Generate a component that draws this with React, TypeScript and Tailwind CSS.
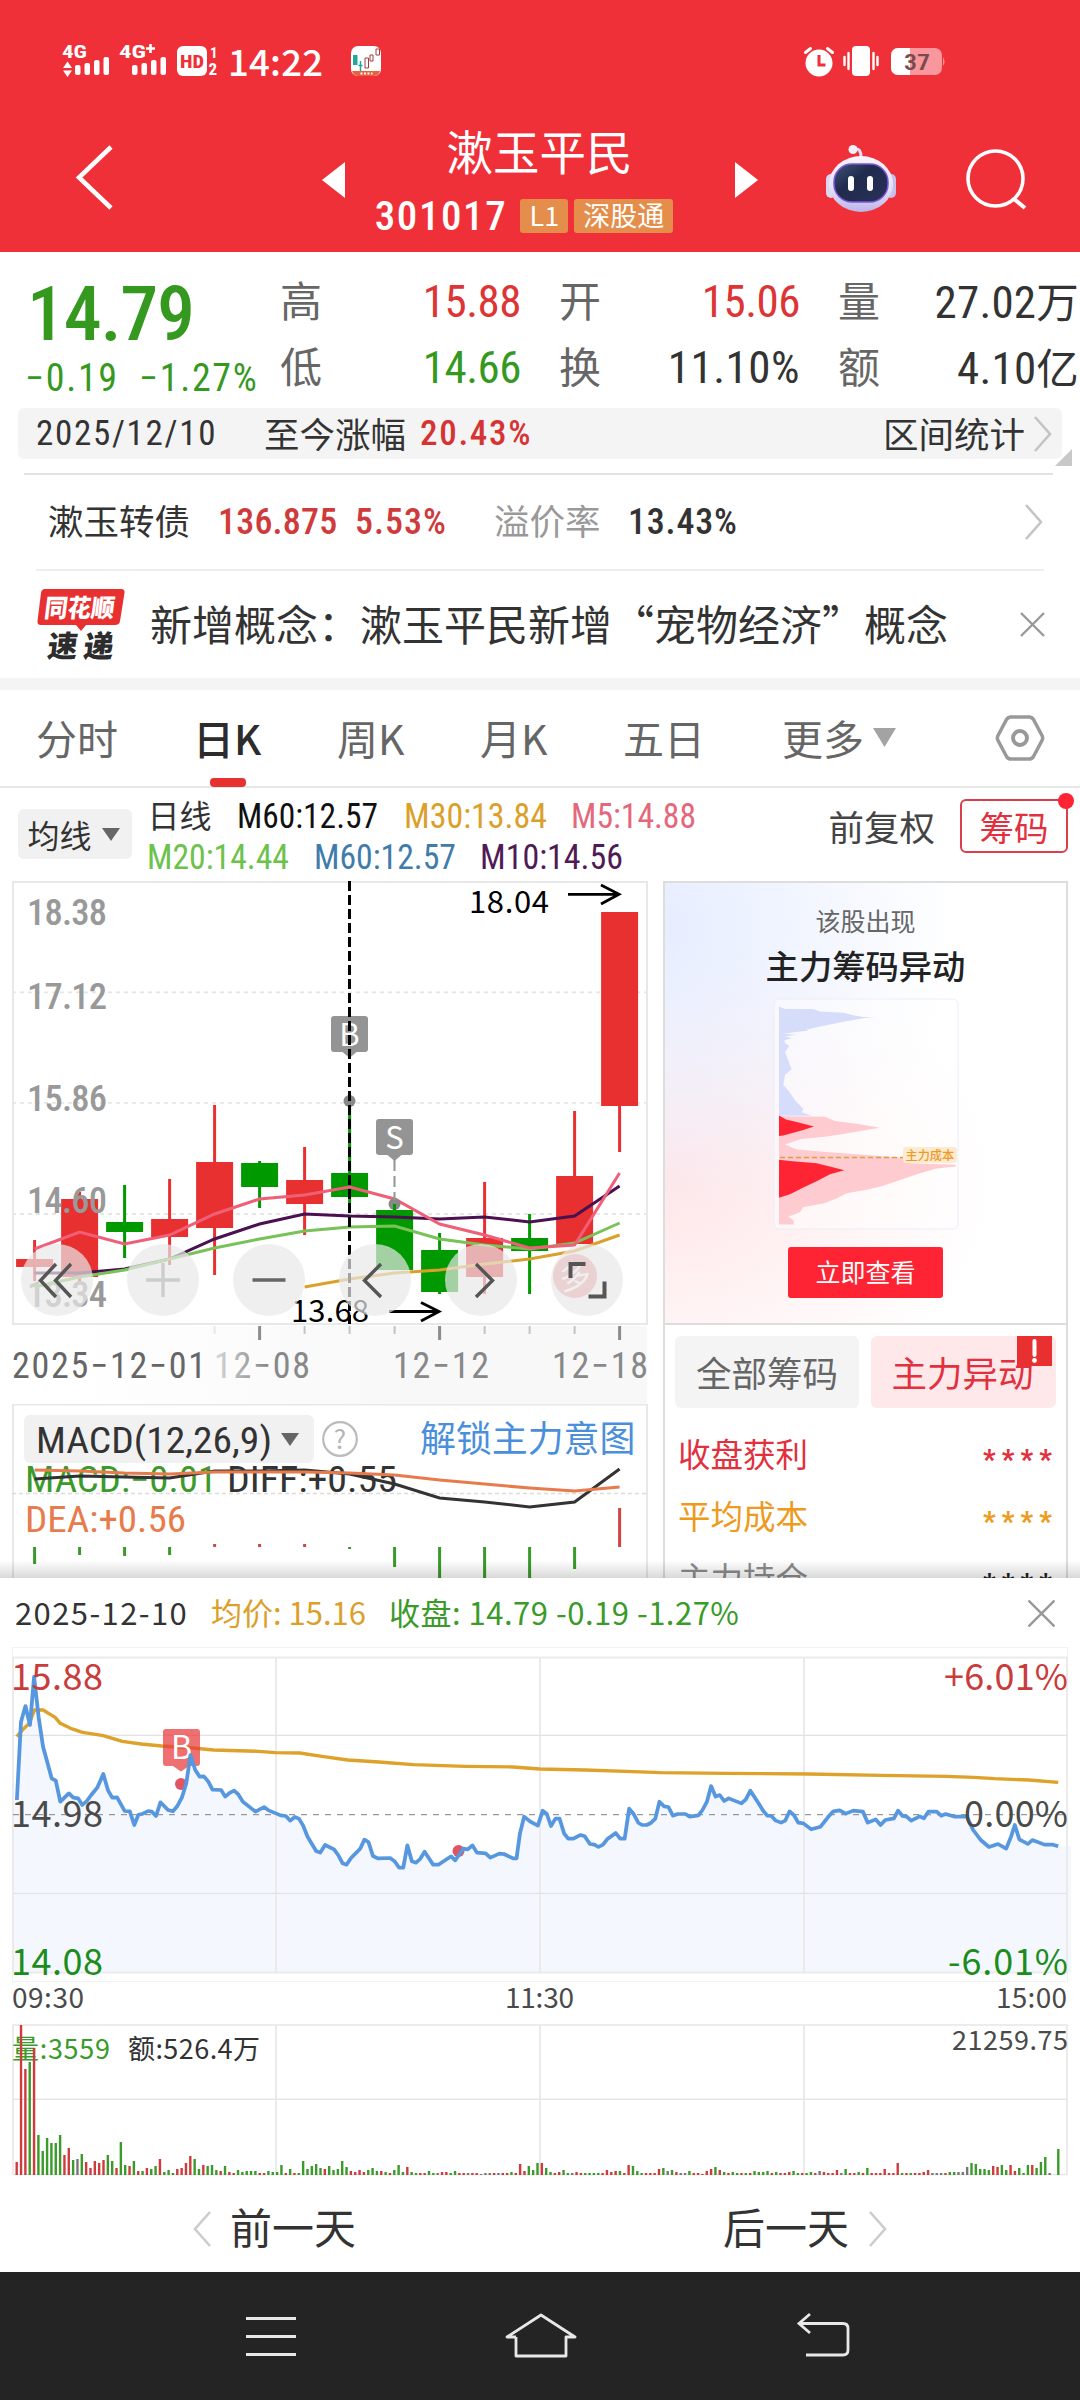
import React from "react";
import clsx from "clsx";

const CJK = "font-['Noto_Sans_CJK_SC',sans-serif]";
const DIN = "font-['Roboto_Condensed','Noto_Sans_CJK_SC',sans-serif]";

const RED = "#e83030";
const GREEN = "#009900";

/* ---------- data ---------- */

// [high, low, body top, body bottom, rising]
const candles: [number, number, number, number, boolean][] = [
  [1240, 1281, 1259, 1267, true],
  [1192, 1282, 1199, 1277, true],
  [1185, 1258, 1222, 1232, false],
  [1179, 1265, 1219, 1237, true],
  [1105, 1275, 1162, 1228, true],
  [1161, 1208, 1163, 1187, false],
  [1147, 1235, 1180, 1204, true],
  [1100, 1203, 1173, 1197, false],
  [1204, 1270, 1210, 1270, false],
  [1233, 1294, 1250, 1292, false],
  [1182, 1294, 1238, 1277, true],
  [1214, 1294, 1238, 1251, false],
  [1111, 1244, 1176, 1244, true],
  [912, 1152, 912, 1106, true],
];

const maLines = [
  { color: "#4a1050", from: 0, ys: [1273, 1273, 1269, 1259, 1239, 1224, 1214, 1216, 1217, 1219, 1217, 1222, 1216, 1186] },
  { color: "#78c257", from: 0, ys: [1287, 1277, 1270, 1259, 1248, 1239, 1231, 1227, 1226, 1239, 1245, 1249, 1243, 1223] },
  { color: "#f05f78", from: 0, ys: [1249, 1232, 1244, 1235, 1214, 1199, 1195, 1187, 1199, 1224, 1235, 1248, 1245, 1173] },
  { color: "#dba02a", from: 6, ys: [1287, 1279, 1273, 1270, 1264, 1259, 1251, 1235] },
];

const diffLine = [1479, 1476, 1477, 1478, 1471, 1471, 1470, 1474, 1484, 1498, 1502, 1507, 1502, 1469];
const deaLine = [1470, 1471, 1473, 1474, 1472, 1472, 1472, 1473, 1475, 1480, 1484, 1488, 1491, 1487];
const macdBars = [17, 8, 9, 8, -3, -3, -3, 2, 20, 40, 40, 40, 22, -39];

const dayX = (i: number) => 34.6 + i * 45;
const toPoints = (ys: number[], from = 0) =>
  ys.map((y, i) => `${dayX(i + from)},${y}`).join(" ");

// minute series, stored at three device units per pixel
const priceLine =
  "49,690 61,455 74,408 87,465 99,320 112,440 125,530 137,575 150,625 162,632 175,695 200,670 213,683 227,685 239,705 252,693 265,675 283,652 300,612 314,662 326,683 340,682 362,723 377,724 390,765 402,734 415,731 430,723 441,725 453,738 466,697 488,720 502,724 515,708 528,683 541,640 553,555 567,600 580,620 592,619 605,635 617,659 642,660 654,680 668,668 680,662 692,673 705,695 742,725 767,711 780,721 815,736 830,738 843,752 856,741 868,746 880,766 893,800 918,843 930,848 944,825 970,838 982,855 995,880 1006,884 1020,863 1046,836 1058,809 1070,816 1083,858 1097,865 1133,864 1146,874 1159,893 1171,893 1183,826 1196,874 1208,878 1220,867 1233,845 1258,884 1273,884 1310,859 1322,871 1345,836 1358,838 1372,826 1385,848 1410,850 1424,863 1450,851 1463,852 1490,865 1500,865 1510,790 1522,740 1540,755 1562,767 1576,722 1588,732 1600,768 1613,746 1625,746 1638,790 1650,806 1665,806 1686,795 1698,799 1713,822 1726,824 1738,831 1751,824 1763,808 1788,789 1801,806 1814,806 1827,716 1840,732 1854,759 1865,765 1878,765 1890,759 1903,746 1915,695 1928,709 1941,711 1954,737 1968,732 1990,732 2003,740 2028,736 2040,720 2053,695 2065,648 2078,680 2090,675 2103,693 2116,685 2153,700 2166,688 2179,662 2198,692 2216,722 2228,737 2240,738 2253,752 2268,758 2280,752 2293,724 2306,736 2318,758 2333,760 2356,778 2383,770 2408,737 2420,724 2438,721 2456,731 2478,722 2506,725 2520,758 2543,748 2557,765 2571,750 2596,745 2608,722 2621,738 2633,740 2646,752 2671,739 2683,745 2696,725 2720,725 2733,737 2746,732 2773,740 2808,740 2826,780 2848,810 2872,831 2898,822 2922,836 2936,800 2947,765 2960,808 2985,822 2998,810 3033,824 3058,824 3073,829";
const avgLine =
  "49,500 65,480 85,460 100,420 125,420 160,442 175,460 205,475 240,487 300,497 355,514 410,522 470,528 560,534 620,540 750,544 800,548 870,549 940,560 1010,570 1100,576 1200,584 1350,589 1490,591 1568,597 1698,600 1818,604 1918,608 2108,610 2348,612 2558,616 2748,619 2828,622 2888,626 2988,630 3073,637";

// colour + height per minute: r up, g down, k flat
const volumes =
  "r13 r150 r106 g113 r127 g40 g24 g37 g32 g32 g40 r20 r27 g15 k16 g21 r13 r7 r14 r12 r15 g20 g14 r7 g33 g10 r9 g14 r4 g4 r7 g6 g9 r16 g3 g5 g2 r6 r7 r12 r19 g16 g6 r10 g9 g10 g5 r4 g9 r3 r2 g5 g3 g4 g4 g4 r2 r2 g4 g3 g3 g10 r2 g6 r2 g2 g14 g6 g9 g11 g7 r6 g9 g5 g6 g14 g8 r4 r3 r5 r3 g5 g7 g4 r4 g3 r2 g5 g10 g3 r8 g3 g2 r2 r2 g4 g2 k2 r3 r3 g2 g4 r2 r2 k2 r2 r2 k1 k2 k2 r2 k2 r2 r2 g3 r2 r11 r4 g9 g5 g12 r12 g7 g3 r2 r3 g5 g2 k2 r3 r2 g2 g2 g2 g2 r2 r5 r3 r4 g4 r2 r10 g9 g4 g2 r2 r2 r2 r6 g7 k4 g5 r3 k2 k2 g4 r2 r2 r1 r4 r6 g8 r5 g3 r2 g3 g2 r2 g2 r2 g4 g3 g3 g4 r2 g3 r2 r2 r3 g4 g2 r2 g2 g3 r2 k4 r3 r2 r2 r5 k2 g6 r2 r2 g3 r2 g7 r2 r2 r2 r6 r2 r2 r12 g2 r2 g2 r2 r2 r3 r5 k2 k2 k2 r2 g3 g3 k3 k3 k8 g12 g11 g6 g6 g5 r9 r8 g10 g5 r10 r4 g7 g2 g10 r10 g7 g13 g18 k2 k0 g26".split(" ");
const volColor: Record<string, string> = { r: "#cf3b3b", g: "#3a9a2a", k: "#777777" };

const quotes = [
  [
    { label: "高", value: "15.88", unit: "", className: "text-[#dd3535] tracking-[-0.5px]" },
    { label: "低", value: "14.66", unit: "", className: "text-[#35991f] tracking-[-0.5px]" },
  ],
  [
    { label: "开", value: "15.06", unit: "", className: "text-[#dd3535] tracking-[-0.5px]" },
    { label: "换", value: "11.10%", unit: "", className: "text-[#333] tracking-[0.5px]" },
  ],
  [
    { label: "量", value: "27.02", unit: "万", className: "text-[#333] tracking-[0.2px]" },
    { label: "额", value: "4.10", unit: "亿", className: "text-[#333] tracking-[0.2px]" },
  ],
];

/* ---------- small pieces ---------- */

function Chevron({ dir = "right", className }: { dir?: "left" | "right"; className?: string }) {
  return (
    <svg width="20" height="36" viewBox="0 0 20 36" fill="none" className={clsx("shrink-0", className)}>
      <path d={dir === "right" ? "M2 1 17 18 2 35" : "M18 1 3 18 18 35"} stroke="currentColor" strokeWidth="2.6" />
    </svg>
  );
}

function SignalBars({ x }: { x: number }) {
  return (
    <g fill="#fff">
      <rect x={x} y="35" width="5.5" height="10" rx="2" />
      <rect x={x + 9.5} y="33" width="5.5" height="12" rx="2" />
      <rect x={x + 19} y="30" width="5.5" height="15" rx="2" />
      <rect x={x + 28.5} y="27" width="5.5" height="18" rx="2" />
    </g>
  );
}

function StatusBar() {
  return (
    <div className="flex h-[60px] items-start pl-[50px]">
      <svg width="350" height="60" viewBox="50 0 350 60" className="shrink-0">
        <text x="62" y="27.5" fontSize="18" fontWeight="700" fill="#fff" textLength="25" lengthAdjust="spacingAndGlyphs" className={DIN}>4G</text>
        <text x="119" y="27.5" fontSize="18" fontWeight="700" fill="#fff" textLength="27" lengthAdjust="spacingAndGlyphs" className={DIN}>4G</text>
        <path d="M150.500 14v9M146 18.500h9" stroke="#fff" strokeWidth="2.600" />
        <path d="M67.500 31.500 72 38H63zM67.500 47 72 40.500H63z" fill="#fff" />
        <SignalBars x={75} />
        <SignalBars x={132} />
        <rect x="177" y="16" width="30" height="30" rx="6" fill="#fff" />
        <text x="180" y="37.500" fontSize="19" fontWeight="800" fill="#f03038" textLength="24" lengthAdjust="spacingAndGlyphs" className={DIN}>HD</text>
        <text x="210" y="27.500" fontSize="15" fontWeight="700" fill="#fff" className={DIN}>1</text>
        <text x="208.500" y="45" fontSize="17" fontWeight="700" fill="#fff" className={DIN}>2</text>
        <text x="228" y="46" fontSize="36.500" fontWeight="500" fill="#fff" textLength="95" className={CJK}>14:22</text>
        <rect x="351" y="16" width="30" height="30" rx="7" fill="#fff" />
        <path d="M352 41h28a7 7 0 0 1-6 5h-16a7 7 0 0 1-6-5z" fill="#e8603c" />
        <path d="M360.500 43.500h12" stroke="#fff" strokeWidth="2" strokeDasharray="2 1.500" />
        <rect x="353" y="25" width="4.500" height="10" fill="#20a89c" />
        <path d="M360.500 31v10M358.500 35.500h4" stroke="#20a89c" strokeWidth="1.500" />
        <path d="M365 28h3.500v10H365zM370 25h3v6h-3zM376 19h3.500v6H376z" fill="#fff" stroke="#a33f3f" strokeWidth="1" />
      </svg>
      <svg width="150" height="60" viewBox="800 30 150 60" className="ml-auto mr-[130px] shrink-0">
        <circle cx="819" cy="63" r="13.500" fill="#fff" />
        <path d="M805.500 52.500 810.500 48.500M832.500 52.500 827.500 48.500" stroke="#fff" strokeWidth="3" strokeLinecap="round" />
        <path d="M819 55v10h6.500" stroke="#f03038" strokeWidth="3" fill="none" />
        <rect x="852" y="46" width="18" height="30" rx="4" fill="#fff" />
        <path d="M848.500 53v16M873.500 53v16M844.500 57v8M877.500 57v8" stroke="#fff" strokeWidth="2.400" strokeLinecap="round" />
        <rect x="891" y="48" width="51" height="27" rx="7" fill="#f9979c" />
        <path d="M898 48h12v27h-12a7 7 0 0 1-7-7V55a7 7 0 0 1 7-7z" fill="#fff" />
        <path d="M943 57q3 4.500 0 9z" fill="#f9979c" />
        <text x="904" y="69.500" fontSize="22" fontWeight="600" fill="#7a4a4c" textLength="26" lengthAdjust="spacingAndGlyphs" className={DIN}>37</text>
      </svg>
    </div>
  );
}

function Robot() {
  return (
    <svg width="76" height="70" viewBox="0 0 76 70">
      <defs>
        <linearGradient id="helmet" x1="0" y1="0" x2="0" y2="1">
          <stop offset="0" stopColor="#f8f5fc" />
          <stop offset=".6" stopColor="#e4dff5" />
          <stop offset="1" stopColor="#bdb4ea" />
        </linearGradient>
        <linearGradient id="visor" x1="0" y1="0" x2="1" y2="1">
          <stop offset="0" stopColor="#40527a" />
          <stop offset=".4" stopColor="#1f2b4d" />
          <stop offset="1" stopColor="#2a3158" />
        </linearGradient>
      </defs>
      <path d="M38 14Q38 5 32 6" stroke="#e4dcf4" strokeWidth="3" fill="none" />
      <circle cx="30" cy="6.500" r="4.500" fill="#f3eefb" />
      <rect x="3" y="31" width="10" height="24" rx="5" fill="#dcd6f3" />
      <rect x="63" y="31" width="10" height="24" rx="5" fill="#c6c0ec" />
      <ellipse cx="38" cy="41" rx="32" ry="28" fill="url(#helmet)" />
      <rect x="11" y="21" width="54" height="38" rx="18" fill="url(#visor)" stroke="#7a56d8" strokeWidth="1.500" />
      <rect x="25" y="33" width="6" height="15" rx="3" fill="#fff" />
      <rect x="44" y="33" width="6" height="15" rx="3" fill="#fff" />
    </svg>
  );
}

function Header() {
  return (
    <header className="h-[252px] bg-[#f03038] pt-[30px] text-white">
      <StatusBar />
      <div className="flex h-[162px] items-start">
        <svg width="120" height="162" viewBox="0 90 120 162" fill="none">
          <path d="M111 147 79 177.500 111 208" stroke="#fff" strokeWidth="4.500" />
        </svg>
        <svg width="226" height="162" viewBox="120 90 226 162">
          <path d="M345 162v36l-23-18z" fill="#fff" />
        </svg>
        <div className="flex w-[389px] flex-col items-center">
          <h1 className={clsx(CJK, "mr-[2px] mt-[32px] text-[46.500px] leading-[56px]")}>漱玉平民</h1>
          <div className="mr-[33px] mt-[20px] flex h-[36px] items-center">
            <span className={clsx(DIN, "mr-[13px] text-[41px] font-medium leading-none tracking-[1.6px]")}>301017</span>
            <span className={clsx(CJK, "mr-1.5 flex h-[34px] w-[48px] items-center justify-center rounded-[3px] bg-[#e58e4b] pb-[3px] text-[27px] leading-none")}>L1</span>
            <span className={clsx(CJK, "flex h-[34px] w-[99px] items-center justify-center rounded-[3px] bg-[#e58e4b] pb-[3px] text-[27px] leading-none")}>深股通</span>
          </div>
        </div>
        <svg width="88" height="162" viewBox="735 90 88 162">
          <path d="M735 162v36l23-18z" fill="#fff" />
        </svg>
        <div className="mt-[53px] w-[76px]">
          <Robot />
        </div>
        <svg width="130" height="162" viewBox="898 90 130 162" fill="none">
          <circle cx="994.500" cy="178.500" r="27.500" stroke="#fff" strokeWidth="3.600" />
          <path d="M1013 199 1024 208" stroke="#fff" strokeWidth="4" />
        </svg>
      </div>
    </header>
  );
}

function QuotePanel() {
  return (
    <section className="flex h-[156px] pt-[22px]">
      <div className="w-[280px] text-[#35991f]">
        <div className={clsx(DIN, "ml-[27px] mt-[2px] text-[76px] font-medium leading-[76px] tracking-[-1.3px]")}>14.79</div>
        <div className={clsx(DIN, "ml-[25px] mt-[7px] flex text-[38px] font-[450] leading-[38px] tracking-[1.7px]")}>
          <span className="w-[114px]">−0.19</span>
          <span>−1.27%</span>
        </div>
      </div>
      {quotes.map((col, i) => (
        <div key={i} className={clsx("w-[241px]", i > 0 && "ml-[38px]")}>
          {col.map((q) => (
            <div key={q.label} className="flex h-[66px] items-start justify-between whitespace-nowrap pt-[5px]">
              <span className={clsx(CJK, "-mt-px text-[42px] leading-none text-[#666]")}>{q.label}</span>
              <span className={clsx(DIN, "text-[45px] font-[450] leading-none", q.className)}>
                {q.value}
                {q.unit && <span className={clsx(CJK, "text-[42.500px] font-normal")}>{q.unit}</span>}
              </span>
            </div>
          ))}
        </div>
      ))}
    </section>
  );
}

function RangeBar() {
  return (
    <div className={clsx(CJK, "relative mx-[18px] flex h-[51px] items-center rounded-[6px] bg-[#f4f4f4] pl-[18px] text-[35.500px] leading-[45px] text-[#333]")}>
      <span className={clsx(DIN, "w-[228px] text-[35px] tracking-[1.7px]")}>2025/12/10</span>
      <span className="pb-[3px]">至今涨幅</span>
      <span className={clsx(DIN, "ml-[14px] text-[35px] font-medium tracking-[1.700px] text-[#d63434]")}>20.43%</span>
      <span className="ml-auto pb-[3px]">区间统计</span>
      <Chevron className="ml-[8px] mr-[9px] text-[#c4c4c4]" />
      <svg width="17" height="17" className="absolute -right-[10px] top-[41px]">
        <path d="M17 0v17H0z" fill="#c8c8c8" />
      </svg>
    </div>
  );
}

function BondRow() {
  return (
    <div className={clsx(CJK, "mx-[36px] flex h-[96px] items-center border-b-2 border-[#eee] pl-[12px] text-[35.500px] leading-[45px] text-[#333]")}>
      <span className="w-[170px] pb-[5px]">漱玉转债</span>
      <span className={clsx(DIN, "w-[137px] text-[36px] font-[470] tracking-[0.2px] text-[#cf3a3a]")}>136.875</span>
      <span className={clsx(DIN, "w-[139px] text-[36px] font-[470] tracking-[1px] text-[#cf3a3a]")}>5.53%</span>
      <span className="w-[134px] pb-[5px] text-[#999]">溢价率</span>
      <span className={clsx(DIN, "text-[36px] font-[470] tracking-[0.8px]")}>13.43%</span>
      <Chevron className="ml-auto text-[#c4c4c4]" />
    </div>
  );
}

function NewsRow() {
  return (
    <div className="flex h-[107px] items-center pl-[37px] pr-[35px]">
      <svg width="90" height="74" viewBox="0 0 90 74" className="shrink-0">
        <path d="M8 1h76q4 0 3.500 4L83 33q-.5 4-5 4H49l-5 6-5-6H4q-4 0-3.500-4L4 5q.5-4 4-4z" fill={RED} />
        <text x="7" y="28.500" fontSize="25" fontWeight="900" fill="#fff" textLength="70" lengthAdjust="spacingAndGlyphs" transform="skewX(-7) translate(3 0)" className={CJK}>同花顺</text>
        <text x="12" y="69" fontSize="30" fontWeight="900" fill="#2c2c2c" textLength="66" transform="skewX(-7) translate(6 0)" className={CJK}>速递</text>
      </svg>
      <span className={clsx(CJK, "ml-[23px] whitespace-nowrap pb-[4px] text-[42px] leading-[56px] text-[#333]")}>新增概念：漱玉平民新增“宠物经济”概念</span>
      <svg width="25" height="25" viewBox="0 0 25 25" className="ml-auto shrink-0">
        <path d="M1 1 24 24M24 1 1 24" stroke="#999" strokeWidth="2.400" />
      </svg>
    </div>
  );
}

function PeriodTabs() {
  const tabs = [
    { label: "分时", w: "w-[157px]" },
    { label: "日K", w: "w-[144px]", active: true },
    { label: "周K", w: "w-[143px]" },
    { label: "月K", w: "w-[143px]" },
    { label: "五日", w: "w-[159px]" },
  ];
  return (
    <nav className={clsx(CJK, "flex h-[98px] items-start border-b-2 border-[#e8e8e8] pl-[36px] text-[41px] leading-none text-[#666]")}>
      {tabs.map((t) => (
        <div key={t.label} className={clsx(t.w, "pt-[27px]", t.active && "font-medium text-[#2c2c2c]")}>
          {t.label}
          {t.active && <div className="ml-[17px] mt-[20px] h-[9px] w-[36px] rounded-[4px] bg-[#e83030]" />}
        </div>
      ))}
      <div className="flex pt-[27px]">
        更多
        <svg width="23" height="19" className="ml-[9px] mt-[11px]">
          <path d="M0 0h23L11.500 19z" fill="#a3a3a3" />
        </svg>
      </div>
      <svg width="50" height="46" viewBox="0 0 50 46" fill="none" stroke="#999" className="ml-auto mr-[35px] mt-[25px]">
        <path d="M16 2h18q3 0 4.500 2.500L47 20.500q1.300 2.500 0 5L38.500 41.500Q37 44 34 44H16q-3 0-4.500-2.500L3 25.500q-1.300-2.500 0-5L11.500 4.500Q13 2 16 2z" strokeWidth="3.500" />
        <circle cx="25" cy="23" r="7" strokeWidth="4" />
      </svg>
    </nav>
  );
}

/* ---------- daily chart column ---------- */

function Legend() {
  return (
    <div className="flex h-[93px]">
      <div className={clsx(CJK, "ml-[18px] mt-[21px] flex h-[50px] w-[114px] items-center justify-center gap-[10px] rounded-[6px] bg-[#f1f1f1] pr-[3px] text-[32px] leading-none text-[#333]")}>
        均线
        <svg width="18" height="13">
          <path d="M0 0h18L9 13z" fill="#666" />
        </svg>
      </div>
      <svg width="600" height="83" viewBox="148 798 600 83" className={clsx(DIN, "ml-[16px] mt-[10px] text-[35px] font-[450]")}>
        <text x="147.500" y="828" fontSize="32" fontWeight="400" fill="#333" className={CJK}>日线</text>
        <text x="237" y="828" fill="#111" textLength="141" lengthAdjust="spacingAndGlyphs">M60:12.57</text>
        <text x="404" y="828" fill="#dba02a" textLength="143" lengthAdjust="spacingAndGlyphs">M30:13.84</text>
        <text x="571" y="828" fill="#e4687c" textLength="125" lengthAdjust="spacingAndGlyphs">M5:14.88</text>
        <text x="147" y="869" fill="#6cc24a" textLength="142" lengthAdjust="spacingAndGlyphs">M20:14.44</text>
        <text x="314" y="869" fill="#3f7cab" textLength="142" lengthAdjust="spacingAndGlyphs">M60:12.57</text>
        <text x="480" y="869" fill="#4f1a55" textLength="143" lengthAdjust="spacingAndGlyphs">M10:14.56</text>
      </svg>
    </div>
  );
}

function TradeFlag({ x, y, label }: { x: number; y: number; label: string }) {
  return (
    <g>
      <rect x={x - 18.500} y={y} width="37" height="36" rx="3" fill="#949494" />
      <path d={`M${x - 7} ${y + 36}h14l-7 6z`} fill="#949494" />
      <text x={x} y={y + 29.500} fontSize="31" fill="#fff" textAnchor="middle" className={CJK}>{label}</text>
    </g>
  );
}

function KlineChart() {
  const labels: [string, number][] = [["18.38", 925], ["17.12", 1009], ["15.86", 1111], ["14.60", 1213], ["13.34", 1307]];
  const buttons = [57, 163, 269, 375, 481, 587];
  return (
    <svg width="660" height="523" viewBox="0 881 660 523" className="block">
      <defs>
        <linearGradient id="axisShade" x1="0" y1="0" x2="1" y2="0">
          <stop offset="0" stopColor="#f8f8f8" stopOpacity="0" />
          <stop offset=".6" stopColor="#f8f8f8" />
        </linearGradient>
        <linearGradient id="dateFade" x1="0" y1="0" x2="1" y2="0">
          <stop offset="0" stopColor="#d8d8d8" />
          <stop offset=".55" stopColor="#888" />
        </linearGradient>
      </defs>
      <rect x="60" y="1326" width="587" height="78" fill="url(#axisShade)" />
      <path d="M12 992.300H647M12 1102.800H647M12 1214H647" stroke="#e6e6e6" strokeWidth="1.800" strokeDasharray="4 4" />
      <rect x="13" y="882" width="634" height="442" fill="none" stroke="#e8e8e8" strokeWidth="2" />
      {candles.map(([hi, lo, top, bottom, up], i) => (
        <g key={i} fill={up ? RED : GREEN}>
          <rect x={dayX(i) - 1.500} y={hi} width="3" height={lo - hi} />
          <rect x={dayX(i) - 18.500} y={top} width="37" height={bottom - top} />
        </g>
      ))}
      {labels.map(([t, y]) => (
        <text key={t} x="27" y={y} fontSize="36.500" fontWeight="500" fill="#999" textLength="80" className={DIN}>{t}</text>
      ))}
      {maLines.map((l) => (
        <polyline key={l.color} points={toPoints(l.ys, l.from)} fill="none" stroke={l.color} strokeWidth="3" />
      ))}
      <TradeFlag x={349.500} y={1016} label="B" />
      <TradeFlag x={394.500} y={1119} label="S" />
      <circle cx="349.500" cy="1101" r="6" fill="#888" />
      <circle cx="394.500" cy="1204" r="6" fill="#888" />
      <path d="M394.500 1160v40" stroke="#949494" strokeWidth="2" strokeDasharray="11 5" />
      <path d="M394.500 1204v8" stroke={GREEN} strokeWidth="3" />
      <path d="M349.500 881v443" stroke="#000" strokeWidth="3" strokeDasharray="10 4" />
      <text x="469" y="913" fontSize="31" fill="#000" textLength="80" className={CJK}>18.04</text>
      <text x="291" y="1322" fontSize="31" fill="#000" textLength="78" className={CJK}>13.68</text>
      <path d="M568 894.300H619M601 885 619 894.300 601 904" fill="none" stroke="#000" strokeWidth="2.800" />
      <path d="M389 1311.500H439M421 1302.500 439 1311.500 421 1321" fill="none" stroke="#000" strokeWidth="2.800" />

      {/* floating controls */}
      <g fill="#e03a42" opacity=".5">
        <circle cx="575" cy="1276" r="22" />
        <text x="575" y="1288" fontSize="32" fill="#fff" textAnchor="middle" transform="rotate(-10 575 1276)" className={CJK}>多</text>
      </g>
      {buttons.map((x) => (
        <circle key={x} cx={x} cy="1280" r="36" fill="#e8e8e8" fillOpacity=".7" />
      ))}
      <g fill="none" stroke="#555" strokeWidth="3.400">
        <path d="M56 1264 40.500 1280.500 56 1297M71 1264 55.500 1280.500 71 1297" />
        <path d="M146 1280H180M163 1263V1297" stroke="#cdcdcd" />
        <path d="M252.500 1280H285.500" stroke="#666" />
        <path d="M381 1264 364.500 1280.500 381 1297" />
        <path d="M476 1264 492.500 1280.500 476 1297" />
        <path d="M570.500 1278V1264H585.500M604.500 1281.500V1296.500H588.500" strokeWidth="4" />
      </g>

      {/* time axis */}
      {[4, 6, 7, 8, 10, 11, 12].map((i) => (
        <path key={i} d={`M${dayX(i)} 1326v8`} stroke={i === 4 ? "#e8e8e8" : "#c4c4c4"} strokeWidth="2" />
      ))}
      {[5, 9, 13].map((i) => (
        <path key={i} d={`M${dayX(i)} 1326v14`} stroke="#8c8c8c" strokeWidth="3" />
      ))}
      <g fontSize="36" fontWeight="450" className={DIN}>
        <text x="12" y="1378" fill="#666" textLength="194">2025−12−01</text>
        <text x="214" y="1378" fill="url(#dateFade)" textLength="96">12−08</text>
        <text x="393" y="1378" fill="#888" textLength="96">12−12</text>
        <text x="552" y="1378" fill="#888" textLength="96">12−18</text>
      </g>
    </svg>
  );
}

function MacdChart() {
  return (
    <svg width="660" height="174" viewBox="0 1404 660 174" className="block">
      <rect x="13" y="1404.500" width="634" height="300" fill="none" stroke="#e8e8e8" strokeWidth="2" />
      <rect x="24" y="1415" width="290" height="48" rx="6" fill="#f1f1f1" />
      <text x="36" y="1452.500" fontSize="36" fontWeight="450" fill="#333" textLength="236" lengthAdjust="spacingAndGlyphs" className={DIN}>MACD(12,26,9)</text>
      <path d="M281 1433h18l-9 13z" fill="#666" />
      <circle cx="340" cy="1439" r="16.800" fill="none" stroke="#bbb" strokeWidth="2.200" />
      <text x="340" y="1448.500" fontSize="26" fill="#b5b5b5" textAnchor="middle" className={CJK}>?</text>
      <text x="420" y="1451.500" fontSize="35.900" fill="#4a8fdb" className={CJK}>解锁主力意图</text>
      <path d="M12 1493.500H647" stroke="#dcdcdc" strokeWidth="1.300" strokeDasharray="4 3" />
      <g fontSize="36" fontWeight="450" className={DIN}>
        <text x="25" y="1492" fill="#3a9a2a" textLength="192" lengthAdjust="spacingAndGlyphs">MACD:−0.01</text>
        <text x="227" y="1492" fill="#333" textLength="170" lengthAdjust="spacingAndGlyphs">DIFF:+0.55</text>
        <text x="25" y="1532" fill="#e87b4c" textLength="161" lengthAdjust="spacingAndGlyphs">DEA:+0.56</text>
      </g>
      <polyline points={toPoints(diffLine)} fill="none" stroke="#333" strokeWidth="3" />
      <polyline points={toPoints(deaLine)} fill="none" stroke="#e87b4c" strokeWidth="3.200" />
      {macdBars.map((v, i) => (
        <rect key={i} x={dayX(i) - 1.500} y={v < 0 ? 1547 + v : 1547} width="3" height={Math.abs(v)} fill={v < 0 ? "#d24545" : "#3a9a2a"} />
      ))}
    </svg>
  );
}

/* ---------- chip distribution column ---------- */

function ChipPromo() {
  return (
    <div className={clsx(CJK, "flex h-[442px] flex-col items-center border-b-2 border-[#ddd] bg-[radial-gradient(circle_at_0%_10%,#e6edff_0%,transparent_52%),radial-gradient(ellipse_at_0%_68%,#ffe6e8_0%,transparent_58%)]")}>
      <div className="mt-[25px] text-[25px] leading-none text-[#666]">该股出现</div>
      <div className="mt-[15px] text-[33.300px] font-medium leading-none text-[#222]">主力筹码异动</div>
      <svg width="186" height="233" viewBox="0 0 186 233" className="mt-[17px]">
        <rect x="1" y="1" width="184" height="230" rx="5" fill="#fff" fillOpacity=".45" stroke="#e9eef8" />
        <g transform="translate(-123 -218) scale(.3333 .3444)">
          <path d="M387 658 405 665H490L510 672 580 676 610 683 640 688 675 689 645 691 580 702 540 710 510 716 470 725 475 727 440 732 400 737 440 740 405 744 425 750 403 756 405 764 418 772 405 790 415 815 425 840 405 856 400 885 418 905 435 930 460 955 455 965 485 975H387z" fill="#d5ddfb" />
          <path d="M387 976 525 978 555 990 620 998 690 1010 640 1018 580 1028 530 1035 450 1043 405 1058 440 1073 530 1080 640 1088 760 1097 780 1113 918 1117V1122L860 1128 810 1142 770 1155 700 1178 650 1190 590 1200 560 1215 520 1230 460 1240 450 1255 415 1268 430 1278 432 1291H387z" fill="#fecbd0" />
          <path d="M387 974 408 986 440 993 492 1006 460 1016 430 1024 400 1032 387 1034zM387 1103 420 1106 500 1113 545 1124 583 1133 540 1145 500 1165 460 1183 420 1203 387 1213z" fill="#ff2433" />
        </g>
        <path d="M7 159.500H130" stroke="#d9a040" strokeWidth="1.500" strokeDasharray="5 3" />
        <rect x="130" y="149" width="54" height="16" rx="3" fill="#fdebd0" />
        <text x="132.500" y="161.500" fontSize="12.200" fontWeight="500" fill="#ee9a28" className={CJK}>主力成本</text>
      </svg>
      <div className="mt-[16px] flex h-[51px] w-[155px] items-center justify-center rounded-[3px] bg-[#ff2433] pb-[2px] text-[25px] leading-none text-white">立即查看</div>
    </div>
  );
}

function ChipRow({ label, className, starClassName }: { label: string; className: string; starClassName?: string }) {
  return (
    <div className={clsx("flex h-[62px] items-center justify-between whitespace-nowrap pl-[13px] pr-[8px] text-[32.500px] leading-[44px]", className)}>
      <span className="pb-[4px]">{label}</span>
      <span className={clsx(DIN, "pt-[9px] text-[27px] font-black tracking-[6.200px]", starClassName)}>****</span>
    </div>
  );
}

function ChipPanel() {
  return (
    <aside className="w-[405px] border-x-2 border-t-2 border-[#ddd]">
      <ChipPromo />
      <div className={clsx(CJK, "flex gap-[12px] px-[10px] pt-[11px] text-[35.500px] leading-none")}>
        <div className="flex h-[72px] w-[184px] items-center justify-center rounded-[6px] bg-[#f4f4f4] pb-px text-[#666]">全部筹码</div>
        <div className="relative flex h-[72px] w-[185px] items-center justify-center rounded-[6px] bg-[#ffe8ea] pb-px pr-0.5 text-[#e2303e]">
          主力异动
          <svg width="35" height="30" className="absolute right-1 top-0">
            <path d="M0 0h35v30H0z" fill={RED} />
            <path d="M17.500 5v14" stroke="#fff" strokeWidth="4" strokeLinecap="round" />
            <circle cx="17.500" cy="24.500" r="2.400" fill="#fff" />
          </svg>
        </div>
      </div>
      <div className={clsx(CJK, "pt-[16px]")}>
        <ChipRow label="收盘获利" className="text-[#e2303e]" />
        <ChipRow label="平均成本" className="text-[#ee9a1c]" />
        <ChipRow label="主力持仓" className="text-[#8c8c8c]" starClassName="text-[#222]" />
      </div>
    </aside>
  );
}

/* ---------- intraday sheet ---------- */

function IntradayChart() {
  return (
    <svg width="1080" height="548" viewBox="0 1640 1080 548" className="block">
      <rect x="12.500" y="1647.500" width="1055" height="334" fill="none" stroke="#f3f3f3" />
      <g transform="translate(0 1570) scale(.34436 .33333)">
        <path d={`M${priceLine.split(" ").join("L")}L3110 829V1208H38V690z`} fill="#f4f8fe" />
      </g>
      <path d="M13 1657.500H1067V1972.500H13zM276 1657V1973M540 1657V1973M804 1657V1973" fill="none" stroke="#ebebeb" strokeWidth="2" />
      <path d="M13 1735.300H1067M13 1893.300H1067" stroke="#e2e2e2" strokeWidth="1.200" />
      <path d="M13 1814.600H1067" stroke="#999" strokeWidth="1.300" strokeDasharray="6 6" />
      <g transform="translate(0 1570) scale(.34436 .33333)" fill="none" strokeLinejoin="round">
        <polyline points={avgLine} stroke="#dea12a" strokeWidth="10" />
      </g>
      <g opacity=".72">
        <rect x="163" y="1729" width="37" height="37" rx="3" fill="#e83a3a" />
        <path d="M173 1766h16l-8 5.500z" fill="#e83a3a" />
      </g>
      <text x="181.500" y="1759" fontSize="32" fill="#fff" textAnchor="middle" className={CJK}>B</text>
      <circle cx="181" cy="1784" r="6" fill="#e05560" />
      <circle cx="458.500" cy="1851" r="6" fill="#e05560" />
      <g transform="translate(0 1570) scale(.34436 .33333)" fill="none" strokeLinejoin="round">
        <polyline points={priceLine} stroke="#5697e0" strokeWidth="11" />
      </g>
      <g fontSize="36" className={CJK}>
        <text x="11" y="1690" fill="#c93c3c" textLength="92">15.88</text>
        <text x="11" y="1827" fill="#4a4a4a" textLength="92">14.98</text>
        <text x="11" y="1975" fill="#1c8c1c" textLength="92">14.08</text>
        <text x="944" y="1690" fill="#c93c3c" textLength="124">+6.01%</text>
        <text x="964" y="1827" fill="#4a4a4a" textLength="104">0.00%</text>
        <text x="948" y="1975" fill="#1c8c1c" textLength="120">-6.01%</text>
      </g>
      <g fontSize="28" fill="#4a4a4a" className={CJK}>
        <text x="12" y="2008" textLength="72">09:30</text>
        <text x="505" y="2008" textLength="69">11:30</text>
        <text x="996" y="2008" textLength="71">15:00</text>
      </g>
      <path d="M13 2025H1067V2174.500H13zM276 2025V2174M540 2025V2174M804 2025V2174M13 2099.300H1067" fill="none" stroke="#e6e6e6" strokeWidth="1.600" />
      <g fontSize="27" className={CJK}>
        <text x="12" y="2059" fill="#3a9a2a" textLength="98">量:3559</text>
        <text x="128" y="2059" fill="#333" textLength="132">额:526.4万</text>
        <text x="952" y="2050" fill="#4a4a4a" textLength="116">21259.75</text>
      </g>
      {volumes.map((v, i) => {
        const h = Number(v.slice(1));
        return <rect key={i} x={15.500 + i * 4.340} y={2175 - h} width="2.400" height={h} fill={volColor[v[0]]} />;
      })}
    </svg>
  );
}

function IntradaySheet() {
  return (
    <section className="h-[694px] bg-white">
      <div className={clsx(CJK, "flex h-[62px] items-center whitespace-pre pl-[15px] pr-[25px] pt-[9px] text-[31px] leading-[44px]")}>
        <span className="w-[196px] pb-[3px] tracking-[1.4px] text-[#333]">2025-12-10</span>
        <span className="w-[178px] pb-[3px] text-[#dba02a]">均价: 15.16</span>
        <span className="pb-[3px] tracking-[0.500px] text-[#3a9a2a]">收盘: 14.79 -0.19 -1.27%</span>
        <svg width="27" height="27" className="ml-auto">
          <path d="M.5.5 26.500 26.500M26.500.5.5 26.500" stroke="#999" strokeWidth="2.400" />
        </svg>
      </div>
      <IntradayChart />
      <div className={clsx(CJK, "flex pt-[10px] text-[42px] leading-[56px] text-[#333]")}>
        <div className="flex w-[533px] items-center pl-[192px]">
          <Chevron dir="left" className="text-[#ccc]" />
          <span className="ml-[18px] pb-[6px]">前一天</span>
        </div>
        <div className="flex items-center pl-[190px]">
          <span className="pb-[6px]">后一天</span>
          <Chevron className="ml-[19px] text-[#ccc]" />
        </div>
      </div>
    </section>
  );
}

function NavBar() {
  return (
    <footer className="flex h-[128px] items-center bg-[#242424]">
      <svg width="1080" height="128" viewBox="0 2272 1080 128" fill="none" stroke="#e8e8e8" strokeWidth="2.800">
        <path d="M246 2318.500H296M246 2336.500H296M246 2354.500H296" />
        <path d="M516 2337H507L541 2315 575 2337H566V2356H516V2337" strokeLinejoin="round" />
        <path d="M810 2314 799 2323.500 810 2333M800 2323.500H843Q848 2323.500 848 2328.500V2350Q848 2355 843 2355H806" />
      </svg>
    </footer>
  );
}

export default function App() {
  return (
    <div className="flex h-[2400px] w-[1080px] flex-col overflow-hidden bg-white">
      <Header />
      <QuotePanel />
      <RangeBar />
      <div className="ml-[24px] mr-[27px] mt-[14px] h-[2px] shrink-0 bg-[#e2e2e2]" />
      <BondRow />
      <NewsRow />
      <div className="h-[12px] shrink-0 bg-[#f4f4f4]" />
      <PeriodTabs />
      <main className="relative h-[790px] shrink-0 overflow-hidden">
        <div className="flex justify-between">
          <Legend />
          <div className={clsx(CJK, "mr-[12px] mt-[11px] flex h-[54px] items-center whitespace-nowrap text-[35.500px] leading-none text-[#444]")}>
            <span className="mr-[25px]">前复权</span>
            <div className="relative flex h-[54px] w-[108px] items-center justify-center rounded-[6px] border-2 border-[#d9404c] text-[34.500px] text-[#e2303e]">
              筹码
              <span className="absolute -right-2 -top-2 size-4 rounded-full bg-[#ff2433]" />
            </div>
          </div>
        </div>
        <div className="flex">
          <div className="w-[663px]">
            <KlineChart />
            <MacdChart />
          </div>
          <ChipPanel />
        </div>
        {/* shadow cast by the sheet below */}
        <div className="absolute inset-x-0 bottom-0 h-[18px] bg-gradient-to-b from-transparent to-black/15" />
      </main>
      <IntradaySheet />
      <NavBar />
    </div>
  );
}
